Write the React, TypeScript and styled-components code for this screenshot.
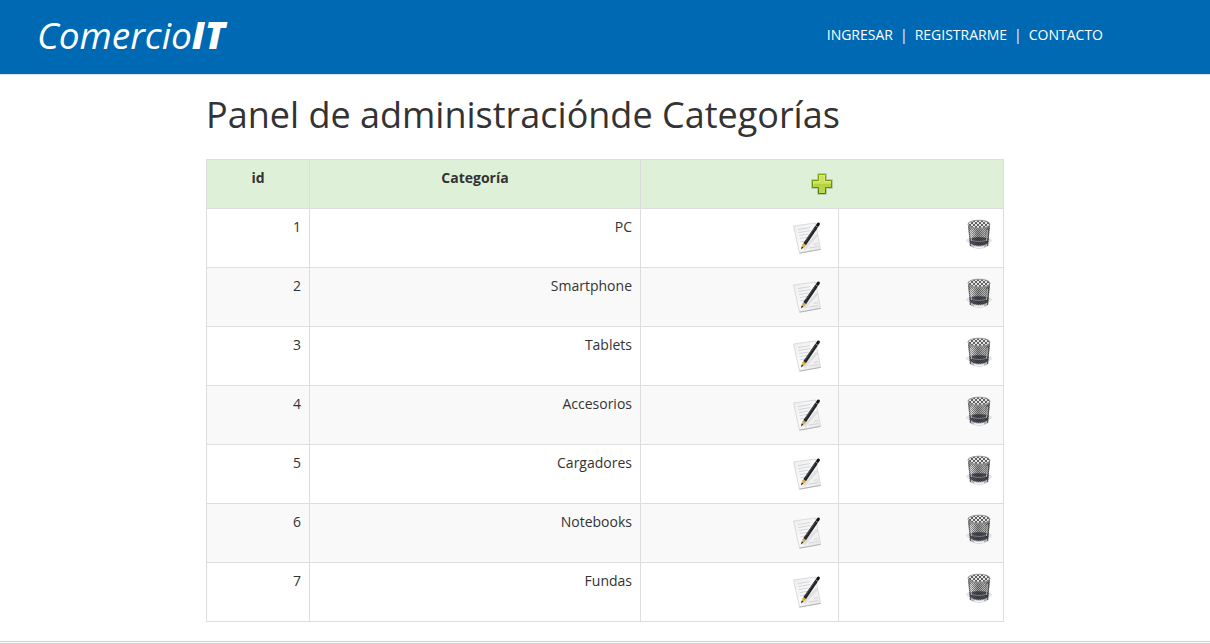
import React from "react";
import styled, { createGlobalStyle } from "styled-components";

const GlobalStyle = createGlobalStyle`
  *, *::before, *::after { box-sizing: border-box; }
  body {
    margin: 0;
    background: #fff;
    color: #333;
    font-family: "Open Sans", "Noto Sans", sans-serif;
    font-size: 14px;
    line-height: 20px;
  }
`;

const Header = styled.header`
  display: flex;
  align-items: flex-start;
  justify-content: space-between;
  padding: 10px 107px 13px 37px;
  background: #0069b4;
  border-bottom: 1px solid #ddd;
`;

const Brand = styled.a`
  color: #fff;
  font-size: 37px;
  font-style: italic;
  line-height: 50px;
  text-decoration: none;
`;

const BrandMark = styled.b`
  font-weight: 800;
`;

const Nav = styled.nav`
  display: flex;
  gap: 7px;
  padding: 15px 0 16px;
  color: #fff;
`;

const NavLink = styled.a`
  color: #fff;
  text-decoration: none;
`;

const Main = styled.main`
  max-width: 798px;
  margin: 0 auto;
  padding: 20px 0 19px;
`;

const Title = styled.h1`
  margin: 0 0 24px;
  font-size: 36px;
  font-weight: 400;
  line-height: 40px;
`;

const Table = styled.table`
  width: 100%;
  table-layout: fixed;
  border-collapse: collapse;
`;

const Col = styled.col<{ $width?: number }>`
  width: ${({ $width }) => ($width ? `${$width}px` : "auto")};
`;

const HeadCell = styled.th`
  padding: 8px;
  border: 1px solid #ddd;
  background: #dff0d8;
  font-weight: 700;
  text-align: center;
  vertical-align: top;
`;

const Row = styled.tr`
  &:nth-child(even) { background: #f9f9f9; }
`;

const Cell = styled.td`
  padding: 8px;
  border: 1px solid #ddd;
  font-weight: 400;
  text-align: right;
  vertical-align: top;
`;

const IconButton = styled.button`
  display: inline-block;
  padding: 0;
  border: 0;
  background: none;
  cursor: pointer;
  vertical-align: top;

  svg { display: block; }
`;

const Footer = styled.footer`
  border-top: 3px double #cccfc4;
`;

const AddIcon = () => (
  <svg width="32" height="32" viewBox="0 0 32 32" aria-hidden="true">
    <defs>
      <linearGradient id="addFill" x1="0" y1="0" x2="0" y2="1">
        <stop offset="0" stopColor="#cfe55c" />
        <stop offset="0.5" stopColor="#c9e05c" />
        <stop offset="0.52" stopColor="#b4d23c" />
        <stop offset="1" stopColor="#bcdc50" />
      </linearGradient>
      <linearGradient id="addEdge" x1="0" y1="0" x2="0" y2="1">
        <stop offset="0" stopColor="#86a810" />
        <stop offset="1" stopColor="#4f7808" />
      </linearGradient>
    </defs>
    <path d="M12 6h8v6h6v8h-6v6h-8v-6H6v-8h6z" fill="none" stroke="#70876a" strokeOpacity="0.35" strokeWidth="2" strokeLinejoin="round" />
    <path d="M12.5 6.5h7v6h6v7h-6v6h-7v-6h-6v-7h6z" fill="url(#addFill)" stroke="url(#addEdge)" strokeLinejoin="round" />
    <path d="M7.5 18.5v-5h6v-6h5v6h6" fill="none" stroke="#e3f386" strokeOpacity="0.5" />
  </svg>
);

const EditIcon = () => (
  <svg width="42" height="42" viewBox="0 0 42 42" aria-hidden="true">
    <defs>
      <linearGradient id="sheet" x1="0" y1="0" x2="1" y2="1">
        <stop offset="0" stopColor="#ececec" />
        <stop offset="0.5" stopColor="#fafafa" />
        <stop offset="1" stopColor="#e6e6e6" />
      </linearGradient>
    </defs>
    <path d="M5.5 9 27.5 6l5 26.2L11.5 36z" fill="url(#sheet)" stroke="#dcdcdc" />
    <path d="M11.5 36.2 32.6 32.4" stroke="#b4b4b4" />
    <path
      d="m10 12.6 12-2m-11.5 5 12-2.1m-11.4 5.1 9.5-1.6M11.7 21.6l8-1.4m-7.5 4.6 5.5-1m8 3.6 4-.7m-9 4.4 9.6-1.6"
      stroke="#d2d5da"
      strokeWidth="1"
    />
    <path d="m16 32.5 13-15" stroke="#000" strokeOpacity="0.08" strokeWidth="3" />
    <path d="M13.4 31.8 14.6 27l3 2.2z" fill="#d8b45b" />
    <path d="m13 32.4.7-3 1.8 1.2z" fill="#222" />
    <path d="m15.6 28.7 1.8-2.6" stroke="#d0a640" strokeWidth="3" />
    <path d="M16.8 27 28.6 9.6" stroke="#242527" strokeWidth="3.2" />
    <path d="m28.6 9.6.9-1.3" stroke="#8b8b8b" strokeWidth="3.2" />
    <path d="m29.6 8.1.8-1.1" stroke="#151515" strokeWidth="3" strokeLinecap="round" />
    <path d="m17.3 24.4 9.4-13.8" stroke="#5a5c60" strokeWidth="0.9" />
  </svg>
);

const TrashIcon = () => (
  <svg width="32" height="32" viewBox="0 0 32 32" aria-hidden="true">
    <defs>
      <linearGradient id="bin" x1="0" y1="0" x2="1" y2="0">
        <stop offset="0" stopColor="#5a5a5a" />
        <stop offset="0.18" stopColor="#dcdcdc" />
        <stop offset="0.45" stopColor="#909090" />
        <stop offset="0.75" stopColor="#bcbcbc" />
        <stop offset="1" stopColor="#3a3a3a" />
      </linearGradient>
      <pattern id="mesh" width="2" height="2" patternUnits="userSpaceOnUse">
        <path d="M0 0h1v1H0zM1 1h1v1H1z" fill="#333" fillOpacity="0.55" />
      </pattern>
      <pattern id="rimMesh" width="4" height="4" patternUnits="userSpaceOnUse">
        <path d="M0 0h2v2H0zM2 2h2v2H2z" fill="#333" fillOpacity="0.75" />
      </pattern>
    </defs>
    <g transform="translate(0 1)">
      <ellipse cx="16" cy="22.6" rx="13" ry="4.2" fill="#d6d6d6" opacity="0.65" />
      <path d="M5 6.5h22l-1.8 20c-2.6 4.2-15.8 4.2-18.4 0z" fill="url(#bin)" />
      <path d="M5 6.5h22l-1.8 20c-2.6 4.2-15.8 4.2-18.4 0z" fill="url(#mesh)" />
      <path d="M6.6 20.5c4-1.6 14.8-1.6 18.8 0l-.5 5.2c-3 2.4-14.8 2.4-17.8 0z" fill="#20222b" opacity="0.7" />
      <path d="M8 21.5c3 2.6 13 2.6 16 0" fill="none" stroke="#7f8290" strokeWidth="0.9" />
      <ellipse cx="16" cy="6.2" rx="11" ry="4" fill="#e6e6e6" />
      <ellipse cx="16" cy="6.2" rx="11" ry="4" fill="url(#rimMesh)" stroke="#8e8e8e" strokeWidth="0.9" />
      <path d="M5.3 8c2 4 19.4 4 21.4 0" fill="none" stroke="#8b8b8b" strokeWidth="1" />
      <path d="M7.2 26.3c3 4 14.6 4 17.6 0" fill="none" stroke="#b4b4bc" strokeWidth="2.4" />
      <path d="M11 28.8c3 .7 7 .7 10 0" fill="none" stroke="#f4f4f4" strokeWidth="1.4" />
      <path d="M7.4 25.6v2.4M24.6 25.6v2.4" stroke="#555" strokeWidth="1" />
      <path d="m7.6 12 .8 11M24.4 12l-.8 11" stroke="#eee" strokeOpacity="0.6" />
    </g>
  </svg>
);

const categories = [
  "PC",
  "Smartphone",
  "Tablets",
  "Accesorios",
  "Cargadores",
  "Notebooks",
  "Fundas",
];

export default function App() {
  return (
    <>
      <GlobalStyle />
      <Header>
        <Brand href="#">
          Comercio<BrandMark>IT</BrandMark>
        </Brand>
        <Nav>
          <NavLink href="#ingresar">INGRESAR</NavLink>
          <span>|</span>
          <NavLink href="#registrarme">REGISTRARME</NavLink>
          <span>|</span>
          <NavLink href="#contacto">CONTACTO</NavLink>
        </Nav>
      </Header>
      <Main>
        <Title>Panel de administraciónde Categorías</Title>
        <Table>
          <colgroup>
            <Col $width={103} />
            <Col $width={331} />
            <Col $width={198} />
            <Col />
          </colgroup>
          <thead>
            <tr>
              <HeadCell scope="col">id</HeadCell>
              <HeadCell scope="col">Categoría</HeadCell>
              <HeadCell scope="col" colSpan={2}>
                <IconButton type="button" aria-label="Agregar categoría">
                  <AddIcon />
                </IconButton>
              </HeadCell>
            </tr>
          </thead>
          <tbody>
            {categories.map((name, index) => (
              <Row key={name}>
                <Cell>{index + 1}</Cell>
                <Cell>{name}</Cell>
                <Cell>
                  <IconButton type="button" aria-label={`Editar ${name}`}>
                    <EditIcon />
                  </IconButton>
                </Cell>
                <Cell>
                  <IconButton type="button" aria-label={`Eliminar ${name}`}>
                    <TrashIcon />
                  </IconButton>
                </Cell>
              </Row>
            ))}
          </tbody>
        </Table>
      </Main>
      <Footer />
    </>
  );
}
